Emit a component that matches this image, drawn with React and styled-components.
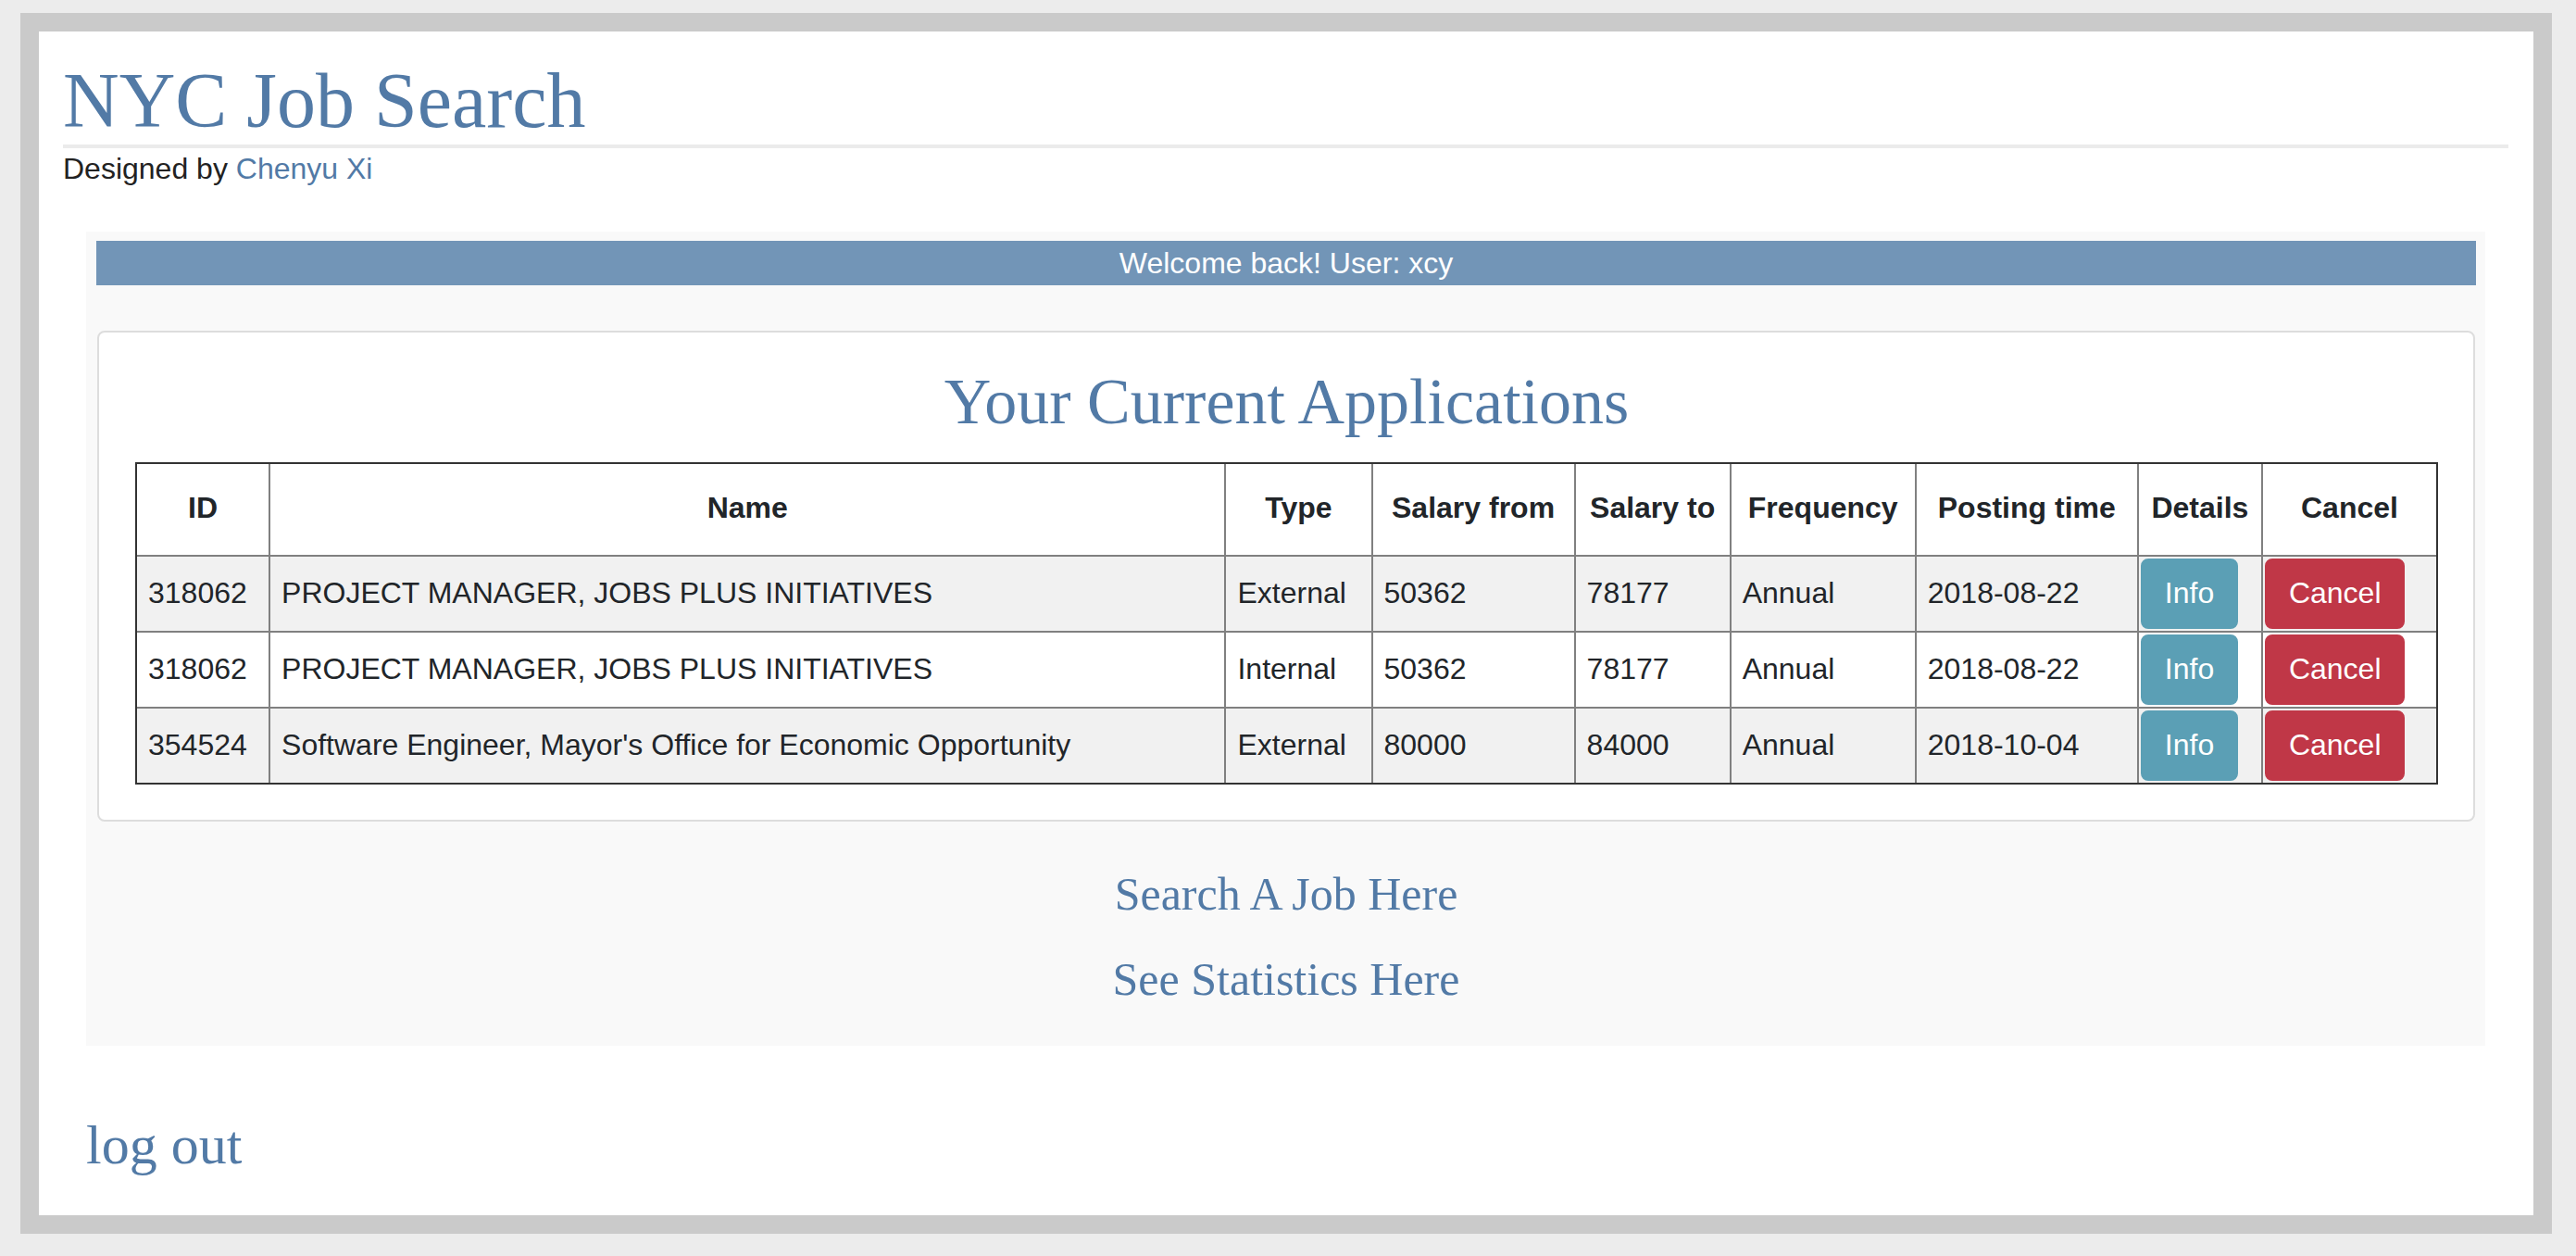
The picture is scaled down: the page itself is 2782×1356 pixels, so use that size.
import styled, { createGlobalStyle } from "styled-components";

const GlobalStyle = createGlobalStyle`
    html, body {
        margin: 0;
        padding: 0;
        background-color: #ececec;
    }
    * {
        box-sizing: border-box;
    }
`;

const colors = {
    primary: "#527aa6",
    bar: "#7295b7",
    text: "#212529",
    info: "#5b9fb5",
    danger: "#c03747",
};

const StyledFrame = styled.div`
    margin: 14px 26px 24px 22px;
    border: 20px solid #cacaca;
    background-color: #ffffff;
    padding: 29px 27px 41px 26px;
`;

const StyledTitle = styled.h1`
    margin: 0;
    padding-bottom: 1px;
    border-bottom: 4px solid #ebebeb;
    font-family: "Liberation Serif", serif;
    font-weight: normal;
    font-size: 84px;
    line-height: 92px;
    color: ${colors.primary};
`;

const StyledCredit = styled.div`
    margin-top: 4px;
    font-family: "Liberation Sans", Arial, sans-serif;
    font-size: 32px;
    line-height: 36px;
    color: #222222;

    a {
        color: ${colors.primary};
        text-decoration: none;
    }
`;

const StyledMain = styled.div`
    margin: 0 25px;
`;

const StyledPanel = styled.section`
    margin-top: 50px;
    padding: 10px 10px 42px 11px;
    background-color: #f9f9f9;
    display: flex;
    flex-direction: column;
    align-items: stretch;
`;

const StyledWelcome = styled.div`
    background-color: ${colors.bar};
    color: #ffffff;
    text-align: center;
    font-family: "Liberation Sans", Arial, sans-serif;
    font-size: 32px;
    line-height: 48px;
`;

const StyledCard = styled.div`
    margin: 49px 1px 0 1px;
    padding: 35px 38px 38px 39px;
    background-color: #ffffff;
    border: 2px solid #dddddd;
    border-radius: 8px;
`;

const StyledCardTitle = styled.h2`
    margin: 0;
    text-align: center;
    font-family: "Liberation Serif", serif;
    font-weight: normal;
    font-size: 70px;
    line-height: 80px;
    color: ${colors.primary};
`;

const StyledTable = styled.table`
    width: 100%;
    margin-top: 25px;
    table-layout: fixed;
    border-collapse: separate;
    border-spacing: 0;
    border: 2px solid #333333;
    font-family: "Liberation Sans", Arial, sans-serif;
    font-size: 32px;
    line-height: 48px;
    color: ${colors.text};

    tbody tr:nth-child(odd) {
        background-color: #f1f1f1;
    }
    tbody tr:last-child td {
        border-bottom: none;
    }
`;

const StyledTh = styled.th`
    width: ${(props) => props.$width}px;
    padding: 23px 4px 27px;
    border-right: ${(props) => (props.$last ? "none" : "2px solid #808080")};
    border-bottom: 2px solid #808080;
    font-weight: bold;
    text-align: center;
    vertical-align: middle;
    white-space: nowrap;
`;

const StyledTd = styled.td`
    padding: ${(props) => (props.$button ? "2px" : "0 12px 3px")};
    border-right: ${(props) => (props.$last ? "none" : "2px solid #808080")};
    border-bottom: 2px solid #808080;
    vertical-align: middle;
    white-space: nowrap;
`;

const StyledButton = styled.button`
    display: inline-block;
    padding: 11px 24px 13px;
    border: 2px solid ${(props) => props.$color};
    border-radius: 8px;
    background-color: ${(props) => props.$color};
    color: #ffffff;
    font-family: "Liberation Sans", Arial, sans-serif;
    font-size: 32px;
    line-height: 48px;
    cursor: pointer;
`;

const StyledLinks = styled.div`
    margin-top: 48px;
    display: flex;
    flex-direction: column;
    align-items: center;
    gap: 32px;
`;

const StyledLink = styled.a`
    font-family: "Liberation Serif", serif;
    font-size: 50px;
    line-height: 60px;
    color: ${colors.primary};
    text-decoration: none;
`;

const StyledLogout = styled.a`
    display: block;
    margin-top: 72px;
    font-family: "Liberation Serif", serif;
    font-size: 60px;
    line-height: 70px;
    color: ${colors.primary};
    text-decoration: none;
`;

const columns = [
    { label: "ID", width: 144 },
    { label: "Name", width: 1032 },
    { label: "Type", width: 158 },
    { label: "Salary from", width: 219 },
    { label: "Salary to", width: 168 },
    { label: "Frequency", width: 200 },
    { label: "Posting time", width: 240 },
    { label: "Details", width: 134 },
    { label: "Cancel", width: 187 },
];

const applications = [
    { id: "318062", name: "PROJECT MANAGER, JOBS PLUS INITIATIVES", type: "External", from: "50362", to: "78177", freq: "Annual", posted: "2018-08-22" },
    { id: "318062", name: "PROJECT MANAGER, JOBS PLUS INITIATIVES", type: "Internal", from: "50362", to: "78177", freq: "Annual", posted: "2018-08-22" },
    { id: "354524", name: "Software Engineer, Mayor's Office for Economic Opportunity", type: "External", from: "80000", to: "84000", freq: "Annual", posted: "2018-10-04" },
];

function App() {
    return (
        <>
            <GlobalStyle />
            <StyledFrame>
                <header>
                    <StyledTitle>NYC Job Search</StyledTitle>
                    <StyledCredit>
                        Designed by <a href="#">Chenyu Xi</a>
                    </StyledCredit>
                </header>
                <StyledMain>
                    <StyledPanel>
                        <StyledWelcome>Welcome back! User: xcy</StyledWelcome>
                        <StyledCard>
                            <StyledCardTitle>Your Current Applications</StyledCardTitle>
                            <StyledTable>
                                <thead>
                                    <tr>
                                        {columns.map((col, i) => (
                                            <StyledTh key={col.label} $width={col.width} $last={i === columns.length - 1}>
                                                {col.label}
                                            </StyledTh>
                                        ))}
                                    </tr>
                                </thead>
                                <tbody>
                                    {applications.map((app, i) => (
                                        <tr key={i}>
                                            <StyledTd>{app.id}</StyledTd>
                                            <StyledTd>{app.name}</StyledTd>
                                            <StyledTd>{app.type}</StyledTd>
                                            <StyledTd>{app.from}</StyledTd>
                                            <StyledTd>{app.to}</StyledTd>
                                            <StyledTd>{app.freq}</StyledTd>
                                            <StyledTd>{app.posted}</StyledTd>
                                            <StyledTd $button>
                                                <StyledButton $color={colors.info}>Info</StyledButton>
                                            </StyledTd>
                                            <StyledTd $button $last>
                                                <StyledButton $color={colors.danger}>Cancel</StyledButton>
                                            </StyledTd>
                                        </tr>
                                    ))}
                                </tbody>
                            </StyledTable>
                        </StyledCard>
                        <StyledLinks>
                            <StyledLink href="#">Search A Job Here</StyledLink>
                            <StyledLink href="#">See Statistics Here</StyledLink>
                        </StyledLinks>
                    </StyledPanel>
                    <StyledLogout href="#">log out</StyledLogout>
                </StyledMain>
            </StyledFrame>
        </>
    );
}

export default App;
